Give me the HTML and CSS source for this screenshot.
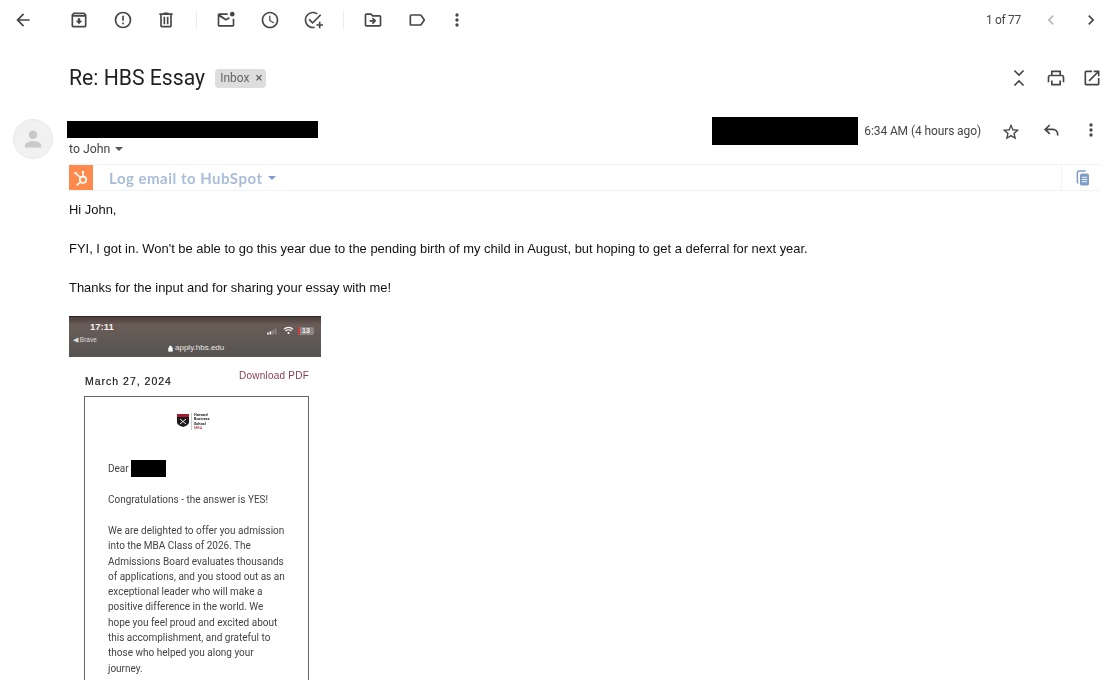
FILE: index.html
```html
<!DOCTYPE html>
<html lang="en">
<head>
<meta charset="utf-8">
<title>Re: HBS Essay</title>
<link rel="stylesheet" href="styles.css">
</head>
<body>
<div class="page">
  <header class="toolbar">
    <button class="tb back"><svg viewBox="0 0 24 24"><path d="M20 11H7.830l5.590-5.590L12 4l-8 8 8 8 1.410-1.410L7.830 13H20v-2z"/></svg></button>
    <div class="tb-group g1">
      <button class="tb"><svg viewBox="0 0 24 24"><path d="M20.540 5.230l-1.390-1.680C18.880 3.210 18.470 3 18 3H6c-.47 0-.88.21-1.160.55L3.460 5.230C3.170 5.570 3 6.020 3 6.500V19c0 1.100.9 2 2 2h14c1.100 0 2-.9 2-2V6.500c0-.48-.17-.93-.46-1.270zM6.240 5h11.520l.83 1H5.420l.82-1zM5 19V8h14v11H5zm8.450-9h-2.900v3H8l4 4 4-4h-2.550z"/></svg></button>
      <button class="tb"><svg viewBox="0 0 24 24"><path d="M12 2a10 10 0 1 0 0 20 10 10 0 0 0 0-20zm0 18a8 8 0 1 1 0-16 8 8 0 0 1 0 16zM11 7h2v6h-2zm0 8h2v2h-2z"/></svg></button>
      <button class="tb"><svg viewBox="0 0 24 24"><path d="M15 4V3H9v1H4v2h1v13c0 1.100.9 2 2 2h10c1.100 0 2-.9 2-2V6h1V4h-5zm2 15H7V6h10v13zM9 8h2v9H9zm4 0h2v9h-2z"/></svg></button>
    </div>
    <span class="tb-sep s1"></span>
    <div class="tb-group g2">
      <button class="tb"><svg viewBox="0 0 24 24"><path d="M20 10.500V18H4V8l8 5 4.600-2.900-1-1.700L12 10.600 5.600 6H14V4H4c-1.100 0-2 .9-2 2v12c0 1.100.9 2 2 2h16c1.100 0 2-.9 2-2v-7.500h-2z"/><circle cx="19.500" cy="5" r="2.800"/></svg></button>
      <button class="tb"><svg viewBox="0 0 24 24"><path d="M11.990 2C6.470 2 2 6.480 2 12s4.470 10 9.990 10C17.520 22 22 17.520 22 12S17.520 2 11.990 2zM12 20c-4.420 0-8-3.580-8-8s3.580-8 8-8 8 3.580 8 8-3.580 8-8 8zm.5-13H11v6l5.250 3.150.75-1.230-4.500-2.670z"/></svg></button>
      <button class="tb"><svg viewBox="0 0 24 24"><path d="M12 2C6.480 2 2 6.480 2 12s4.480 10 10 10c.7 0 1.300-.07 2-.2v-2.050c-.65.16-1.300.25-2 .25-4.420 0-8-3.580-8-8s3.580-8 8-8c1.600 0 3.100.47 4.350 1.280l1.440-1.440C16.150 2.690 14.160 2 12 2zM20.500 5l-9 9-3.500-3.500-1.400 1.400 4.900 4.900L22 6.400 20.500 5zM19 14v3h-3v2h3v3h2v-3h3v-2h-3v-3h-2z"/></svg></button>
    </div>
    <span class="tb-sep s2"></span>
    <div class="tb-group g3">
      <button class="tb"><svg viewBox="0 0 24 24"><path d="M20 6h-8l-2-2H4c-1.100 0-2 .9-2 2v12c0 1.100.9 2 2 2h16c1.100 0 2-.9 2-2V8c0-1.100-.9-2-2-2zm0 12H4V6h5.170l2 2H20v10zM12.200 12H8v2h4.200l-1.600 1.600L12 17l4-4-4-4-1.400 1.400z"/></svg></button>
      <button class="tb"><svg viewBox="0 0 24 24"><path d="M17.630 5.840C17.270 5.330 16.670 5 16 5L5 5.010C3.900 5.010 3 5.900 3 7v10c0 1.100.9 1.990 2 1.990L16 19c.67 0 1.270-.33 1.630-.84L22 12l-4.370-6.160zM16 17H5V7h11l3.550 5L16 17z"/></svg></button>
      <button class="tb narrow"><svg viewBox="0 0 24 24"><path d="M12 8a2 2 0 1 0 0-4 2 2 0 0 0 0 4zm0 2a2 2 0 1 0 0 4 2 2 0 0 0 0-4zm0 6a2 2 0 1 0 0 4 2 2 0 0 0 0-4z"/></svg></button>
    </div>
    <div class="pager">
      <span class="count">1 of 77</span>
      <button class="tb light"><svg viewBox="0 0 24 24"><path d="M15.410 7.410L14 6l-6 6 6 6 1.410-1.410L10.830 12z"/></svg></button>
      <button class="tb"><svg viewBox="0 0 24 24"><path d="M10 6L8.590 7.410 13.170 12l-4.580 4.590L10 18l6-6z"/></svg></button>
    </div>
  </header>

  <section class="subject-row">
    <h1 class="subject">Re: HBS Essay</h1>
    <span class="chip">Inbox <span class="chip-x">×</span></span>
    <div class="subject-actions">
      <button class="tb"><svg viewBox="0 0 24 24"><path class="line" d="M6.500 3 12 8.500 17.500 3M6.500 21 12 15.500 17.500 21"/></svg></button>
      <button class="tb"><svg viewBox="0 0 24 24"><path d="M19 8h-1V3H6v5H5c-1.660 0-3 1.340-3 3v6h4v4h12v-4h4v-6c0-1.660-1.340-3-3-3zM8 5h8v3H8V5zm8 14H8v-4h8v4zm2-2v-2H6v2H4v-6c0-.55.45-1 1-1h14c.55 0 1 .45 1 1v6h-2z"/></svg></button>
      <button class="tb"><svg viewBox="0 0 24 24"><path d="M19 19H5V5h7V3H5c-1.110 0-2 .9-2 2v14c0 1.100.89 2 2 2h14c1.100 0 2-.9 2-2v-7h-2v7zM14 3v2h3.590l-9.830 9.830 1.410 1.410L19 6.410V10h2V3h-7z"/></svg></button>
    </div>
  </section>

  <section class="msg-head">
    <div class="avatar"><svg viewBox="0 0 40 40"><circle cx="20" cy="15.500" r="4.500"/><path d="M11.500 29v-2.500c0-3 5.500-4.500 8.500-4.500s8.500 1.500 8.500 4.500V29z"/></svg></div>
    <div class="sender">
      <div class="redact name"></div>
      <div class="to">to John <span class="caret"></span></div>
    </div>
    <div class="meta">
      <div class="redact date"></div>
      <span class="time">6:34 AM (4 hours ago)</span>
      <button class="tb star"><svg viewBox="0 0 24 24"><path d="M22 9.240l-7.190-.62L12 2 9.190 8.630 2 9.240l5.460 4.730L5.820 21 12 17.270 18.180 21l-1.630-7.030L22 9.240zM12 15.400l-3.760 2.270 1-4.280-3.320-2.880 4.380-.38L12 6.100l1.710 4.040 4.380.38-3.320 2.880 1 4.280L12 15.400z"/></svg></button>
      <button class="tb"><svg viewBox="0 0 24 24"><path d="M20 18.500v-1.500c0-3.300-2.400-5.700-5.700-5.700H5.500M10.500 6 5 11.300l5.500 5.300" class="line"/></svg></button>
      <button class="tb"><svg viewBox="0 0 24 24"><path d="M12 8a2 2 0 1 0 0-4 2 2 0 0 0 0 4zm0 2a2 2 0 1 0 0 4 2 2 0 0 0 0-4zm0 6a2 2 0 1 0 0 4 2 2 0 0 0 0-4z"/></svg></button>
    </div>
  </section>

  <section class="hubspot">
    <div class="hs-logo"><svg viewBox="0 0 24 24"><circle cx="14" cy="14.300" r="3.200" class="ring"/><path class="hs-line" d="M14 10.500V7M11.600 12 7 8.200M11.600 16.500 9 18.800"/><circle cx="14" cy="6.500" r="1.200" class="dot"/><circle cx="6.500" cy="7.500" r="1.200" class="dot"/><circle cx="8.500" cy="19.200" r="1.100" class="dot"/></svg></div>
    <div class="hs-log">Log email to HubSpot <span class="hs-caret"></span></div>
    <div class="hs-copy"><svg viewBox="0 0 24 24"><path class="copy-back" d="M6 18.500c-1 0-1.500-.6-1.500-1.500V5c0-1.400 1-2.500 2.500-2.500h8.500"/><rect x="8" y="6" width="12" height="16" rx="2.500"/><path class="copy-lines" d="M10.500 11h7M10.500 14h7M10.500 17h7"/></svg></div>
  </section>

  <main class="body-text">
    <p>Hi John,</p>
    <p>FYI, I got in. Won't be able to go this year due to the pending birth of my child in August, but hoping to get a deferral for next year.</p>
    <p>Thanks for the input and for sharing your essay with me!</p>
  </main>

  <figure class="shot">
    <div class="phone-bar">
      <div class="phone-left">
        <span class="clock">17:11</span>
        <span class="brave">◀ Brave</span>
      </div>
      <div class="phone-url"><svg class="lock" viewBox="0 0 8 10"><path d="M1 4h6v5.500H1zM2.200 4V2.800a1.800 1.800 0 0 1 3.600 0V4" class="lock-p"/></svg>apply.hbs.edu</div>
      <div class="phone-right">
        <svg class="signal" viewBox="0 0 14 8"><rect x="0" y="6" width="2" height="2" fill="#fff"/><rect x="3" y="4.500" width="2" height="3.500" fill="#fff"/><rect x="6" y="3" width="2" height="5" fill="#8d8782"/><rect x="9" y="1" width="2" height="7" fill="#8d8782"/></svg>
        <svg class="wifi" viewBox="0 0 12 9"><path d="M1 3.200a7 7 0 0 1 10 0M2.800 5a4.500 4.500 0 0 1 6.400 0" class="wifi-p"/><circle cx="6" cy="7.200" r="1.200" fill="#fff"/></svg>
        <span class="battery"><i class="battery-red"></i>13</span>
      </div>
    </div>
    <div class="shot-head">
      <span class="shot-date">March 27, 2024</span>
      <span class="shot-dl">Download PDF</span>
    </div>
    <div class="letter">
      <div class="hbs">
        <svg class="crest" viewBox="0 0 12 13"><path d="M0 0h12v8c0 2.500-3 4-6 5-3-1-6-2.500-6-5z" fill="#1e1a1b"/><path d="M0 0h12v3H0z" fill="#a51c30"/><path d="M3 5 9 10M9 5 3 10" stroke="#fff" stroke-width=".9"/></svg>
        <span class="hbs-words">Harvard<br>Business<br>School<br><em>MBA</em></span>
      </div>
      <div class="dear">Dear <span class="redact dear-name"></span></div>
      <p class="congrats">Congratulations - the answer is YES!</p>
      <p class="para">We are delighted to offer you admission<br>into the MBA Class of 2026. The<br>Admissions Board evaluates thousands<br>of applications, and you stood out as an<br>exceptional leader who will make a<br>positive difference in the world. We<br>hope you feel proud and excited about<br>this accomplishment, and grateful to<br>those who helped you along your<br>journey.</p>
    </div>
  </figure>
</div>
</body>
</html>
```

FILE: styles.css
```css
* { box-sizing: border-box; }
html, body { margin: 0; padding: 0; background: #fff; }
.page {
  width: 1113px;
  height: 680px;
  overflow: hidden;
  font-family: Roboto, "Liberation Sans", sans-serif;
  color: #202124;
  filter: blur(0.4px);
}
button.tb {
  display: flex;
  align-items: center;
  justify-content: center;
  width: 20px;
  height: 20px;
  padding: 0;
  border: 0;
  background: none;
  flex: none;
}
.tb svg { width: 20px; height: 20px; fill: #444746; display: block; }
.tb svg .line { fill: none; stroke: #444746; stroke-width: 2; }
.tb.light svg { fill: #b4b6b8; }

.toolbar {
  display: flex;
  align-items: center;
  height: 40px;
  padding-left: 13px;
}
.tb-group { display: flex; align-items: center; gap: 23.500px; }
.g1 { margin-left: 36px; }
.tb-sep { width: 1px; height: 20px; background: #eceded; flex: none; }
.s1 { margin-left: 20px; }
.g2 { margin-left: 19px; }
.s2 { margin-left: 19.500px; }
.g3 { margin-left: 19.500px; }
.g3 .narrow { margin-left: -3.500px; }
.pager { margin-left: auto; display: flex; align-items: center; padding-right: 12px; }
.count { font-size: 12px; letter-spacing: -0.3px; color: #444746; margin-right: 20px; }
.pager .tb + .tb { margin-left: 20px; }

.subject-row {
  display: flex;
  align-items: center;
  height: 40px;
  margin-top: 18px;
  padding-left: 69px;
  padding-right: 11px;
}
.subject { margin: 0; font-size: 21.200px; font-weight: 400; line-height: 28px; color: #1f1f1f; }
.chip {
  margin-left: 10px;
  height: 19px;
  width: 51px;
  padding-left: 5px;
  background: #dddddd;
  border-radius: 4px;
  font-size: 12px;
  line-height: 18px;
  color: #666;
  white-space: nowrap;
}
.chip-x { color: #555; margin-left: 3px; font-size: 13px; }
.subject-actions { margin-left: auto; display: flex; gap: 16.500px; align-items: center; }

.msg-head {
  display: flex;
  height: 45px;
  margin-top: 21px;
  padding-left: 13px;
  padding-right: 12px;
}
.avatar {
  width: 40px;
  height: 40px;
  border-radius: 50%;
  background: #f1f1f1;
  border: 1px solid #e8e8e8;
  flex: none;
}
.avatar svg { display: block; width: 38px; height: 38px; fill: #c8c9ca; }
.redact { background: #000; }
.sender { margin-left: 14px; padding-top: 2px; }
.name { width: 251px; height: 17px; }
.to { font-size: 12.300px; line-height: 14px; margin-top: 4px; padding-left: 2px; color: #444; display: flex; align-items: center; gap: 5px; }
.caret { width: 0; height: 0; border: 4px solid transparent; border-top: 4.500px solid #555; border-bottom: 0; }
.meta { margin-left: auto; display: flex; align-items: flex-start; }
.date { width: 146px; height: 28px; margin-top: -2px; }
.time { margin-left: 6px; font-size: 12px; letter-spacing: -0.1px; line-height: 24px; color: #444; white-space: nowrap; }
.meta .tb { margin-top: 1px; }
.meta .star { margin-left: 20px; margin-top: 3px; }
.meta .tb + .tb { margin-left: 20px; }

.hubspot {
  display: flex;
  align-items: center;
  height: 27px;
  margin-left: 68px;
  width: 1032px;
  border-top: 1px solid #eef3f8;
  border-bottom: 1px solid #eef3f8;
}
.hs-logo { width: 24px; height: 25px; margin-left: 1px; background: #ff8a4c; flex: none; }
.hs-logo svg { display: block; width: 24px; height: 25px; }
.hs-line { fill: none; stroke: #fff; stroke-width: 1.500; }
.ring { fill: none; stroke: #fff; stroke-width: 1.700; }
.dot { fill: #fff; }
.hs-log {
  margin-left: 16px;
  font-family: "Lato", "Liberation Sans", sans-serif;
  font-size: 15px;
  font-weight: 700;
  letter-spacing: 0.5px;
  color: #a9bdd8;
  display: flex;
  align-items: center;
  gap: 5px;
}
.hs-caret { width: 0; height: 0; border: 4px solid transparent; border-top: 4.500px solid #7d9fca; border-bottom: 0; }
.hs-copy { margin-left: auto; width: 39px; height: 25px; padding-left: 4px; border-left: 1px solid #eef3f8; display: flex; align-items: center; justify-content: center; }
.hs-copy svg { width: 18px; height: 18px; display: block; }
.copy-back { fill: none; stroke: #7e9dc6; stroke-width: 2; }
.hs-copy rect { fill: #7e9dc6; }
.copy-lines { fill: none; stroke: #fff; stroke-width: 1.200; }

.body-text {
  padding-left: 69px;
  font-family: "Liberation Sans", Arial, sans-serif;
  font-size: 12.950px;
  line-height: 15px;
  color: #111;
  padding-top: 11px;
}
.body-text p { margin: 0 0 24px; }
.body-text p:last-child { margin-bottom: 0; }

.shot {
  margin: 21px 0 0 69px;
  width: 252px;
  font-family: "Liberation Sans", Arial, sans-serif;
}
.phone-bar {
  height: 41px;
  background: linear-gradient(#4a3e3c 0, #6a5c56 20%, #5f5955 60%, #555350 100%);
  border-top: 1px solid #2c2625;
  display: flex;
  color: #f2f0ee;
  position: relative;
}
.phone-left { display: flex; flex-direction: column; padding-left: 4px; }
.clock { font-size: 9.500px; font-weight: 700; line-height: 12px; margin: 4px 0 0 17px; }
.brave { font-size: 6.500px; line-height: 9px; margin-top: 2px; color: #ddd; }
.phone-url {
  position: absolute;
  left: 99px;
  top: 26px;
  font-size: 8px;
  line-height: 10px;
  display: flex;
  align-items: center;
  gap: 2px;
  color: #e9e7e5;
}
.lock { width: 5px; height: 7px; }
.lock-p { fill: #fff; stroke: #fff; stroke-width: 1; }
.phone-right { margin-left: auto; display: flex; align-items: center; gap: 4px; align-self: flex-start; margin-top: 9px; padding-right: 7px; }
.signal { width: 12px; height: 8px; }
.wifi { width: 11px; height: 9px; }
.wifi-p { fill: none; stroke: #fff; stroke-width: 1.300; }
.battery { position: relative; width: 16px; height: 8px; border-radius: 2px; background: #8a8682; font-size: 7px; line-height: 8px; font-weight: 700; text-align: center; overflow: hidden; }
.battery-red { position: absolute; left: 0; top: 0; width: 2px; height: 8px; background: #d8343b; }

.shot-head {
  display: flex;
  justify-content: space-between;
  padding: 12px 12px 0 16px;
  height: 39px;
}
.shot-date { font-size: 10.500px; font-weight: 400; letter-spacing: 1px; color: #1a1a1a; line-height: 14px; margin-top: 5px; -webkit-text-stroke: 0.2px #1a1a1a; }
.shot-dl { font-size: 10px; letter-spacing: 0.22px; color: #8f3a52; line-height: 13px; }
.letter {
  margin-left: 15px;
  width: 225px;
  height: 300px;
  border: 1px solid #666;
  border-bottom: 0;
  padding-left: 23px;
  color: #444;
  font-family: Roboto, "Liberation Sans", sans-serif;
  font-size: 10px;
  letter-spacing: 0;
}
.hbs { display: flex; align-items: flex-start; gap: 2px; margin: 16px 0 0 69px; height: 21px; }
.crest { width: 12px; height: 13px; margin-top: 1px; }
.hbs-words { border-left: 1px solid #ccc; padding-left: 2px; font-size: 3.800px; line-height: 4.300px; font-weight: 700; color: #222; letter-spacing: 0; white-space: nowrap; }
.hbs-words em { font-style: normal; font-weight: 400; color: #a51c30; }
.dear { display: flex; align-items: center; gap: 2px; margin-top: 25px; height: 18px; }
.dear-name { width: 35px; height: 17px; display: block; }
.congrats { margin: 15px 0 0; line-height: 15px; white-space: nowrap; }
.para { margin: 16px 0 0; line-height: 15.300px; white-space: nowrap; }
```
